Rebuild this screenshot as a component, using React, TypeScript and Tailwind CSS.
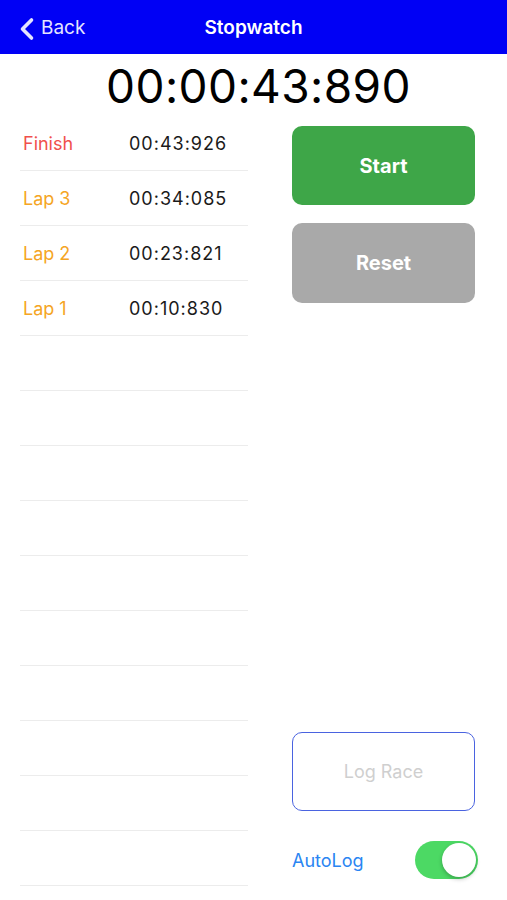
import { FiChevronLeft } from "react-icons/fi"

const laps = [
  { label: "Finish", time: "00:43:926", color: "text-[#f0504c]" },
  { label: "Lap 3", time: "00:34:085", color: "text-[#f5a524]" },
  { label: "Lap 2", time: "00:23:821", color: "text-[#f5a524]" },
  { label: "Lap 1", time: "00:10:830", color: "text-[#f5a524]" },
]

const TOTAL_ROWS = 14

export default function App() {
  const rows = Array.from({ length: TOTAL_ROWS }, (_, i) => laps[i] ?? null)

  return (
    <div className="w-[507px] h-[900px] bg-white overflow-hidden font-['Inter','Liberation_Sans',sans-serif]">
      {/* === Nav Bar === */}
      <div className="h-[54px] bg-[#0000f5] flex items-center relative pt-[3px]">
        <div className="flex items-center pl-[9px] text-[#e4e4ff]">
          <FiChevronLeft className="text-[36px] -mr-[4px]" strokeWidth={2.4} />
          <span className="text-[19px]">Back</span>
        </div>
        <div className="absolute inset-0 pt-[3px] flex items-center justify-center pointer-events-none">
          <span className="text-white text-[19px] font-semibold">Stopwatch</span>
        </div>
      </div>

      {/* === Timer === */}
      <div className="h-[62px] flex items-center justify-center pl-[10px]">
        <span className="text-[46px] tracking-[0.4px] text-black leading-none pt-[2px]">00:00:43:890</span>
      </div>

      <div className="flex">
        {/* === Lap List === */}
        <div className="ml-[20px] w-[228px]">
          {rows.map((row, i) => (
            <div key={i} className="h-[55px] border-b border-[#ececec] flex items-center">
              {row && (
                <>
                  <span className={`w-[109px] pl-[3px] text-[18px] ${row.color}`}>{row.label}</span>
                  <span className="text-[18px] tracking-[1px] text-[#1a1a1a]">{row.time}</span>
                </>
              )}
            </div>
          ))}
        </div>

        {/* === Controls === */}
        <div className="ml-[44px] w-[183px] flex flex-col pt-[10px] pb-[7px]">
          <button className="h-[79px] rounded-[10px] bg-[#3ea648] text-white text-[20px] font-bold">
            Start
          </button>
          <button className="mt-[18px] h-[80px] rounded-[10px] bg-[#a9a9a9] text-white text-[20px] font-bold">
            Reset
          </button>

          <button className="mt-auto h-[79px] rounded-[10px] border-[1.5px] border-[#4a63e0] text-[#cfcfcf] text-[18px]">
            Log Race
          </button>

          <div className="mt-[30px] w-[186px] flex items-center justify-between">
            <span className="text-[#2a85f2] text-[18px]">AutoLog</span>
            <div className="w-[63px] h-[38px] rounded-full bg-[#4cd964] flex items-center justify-end px-[2px]">
              <div className="w-[34px] h-[34px] rounded-full bg-white shadow-[0_2px_4px_rgba(0,0,0,0.25)]" />
            </div>
          </div>
        </div>
      </div>
    </div>
  )
}
